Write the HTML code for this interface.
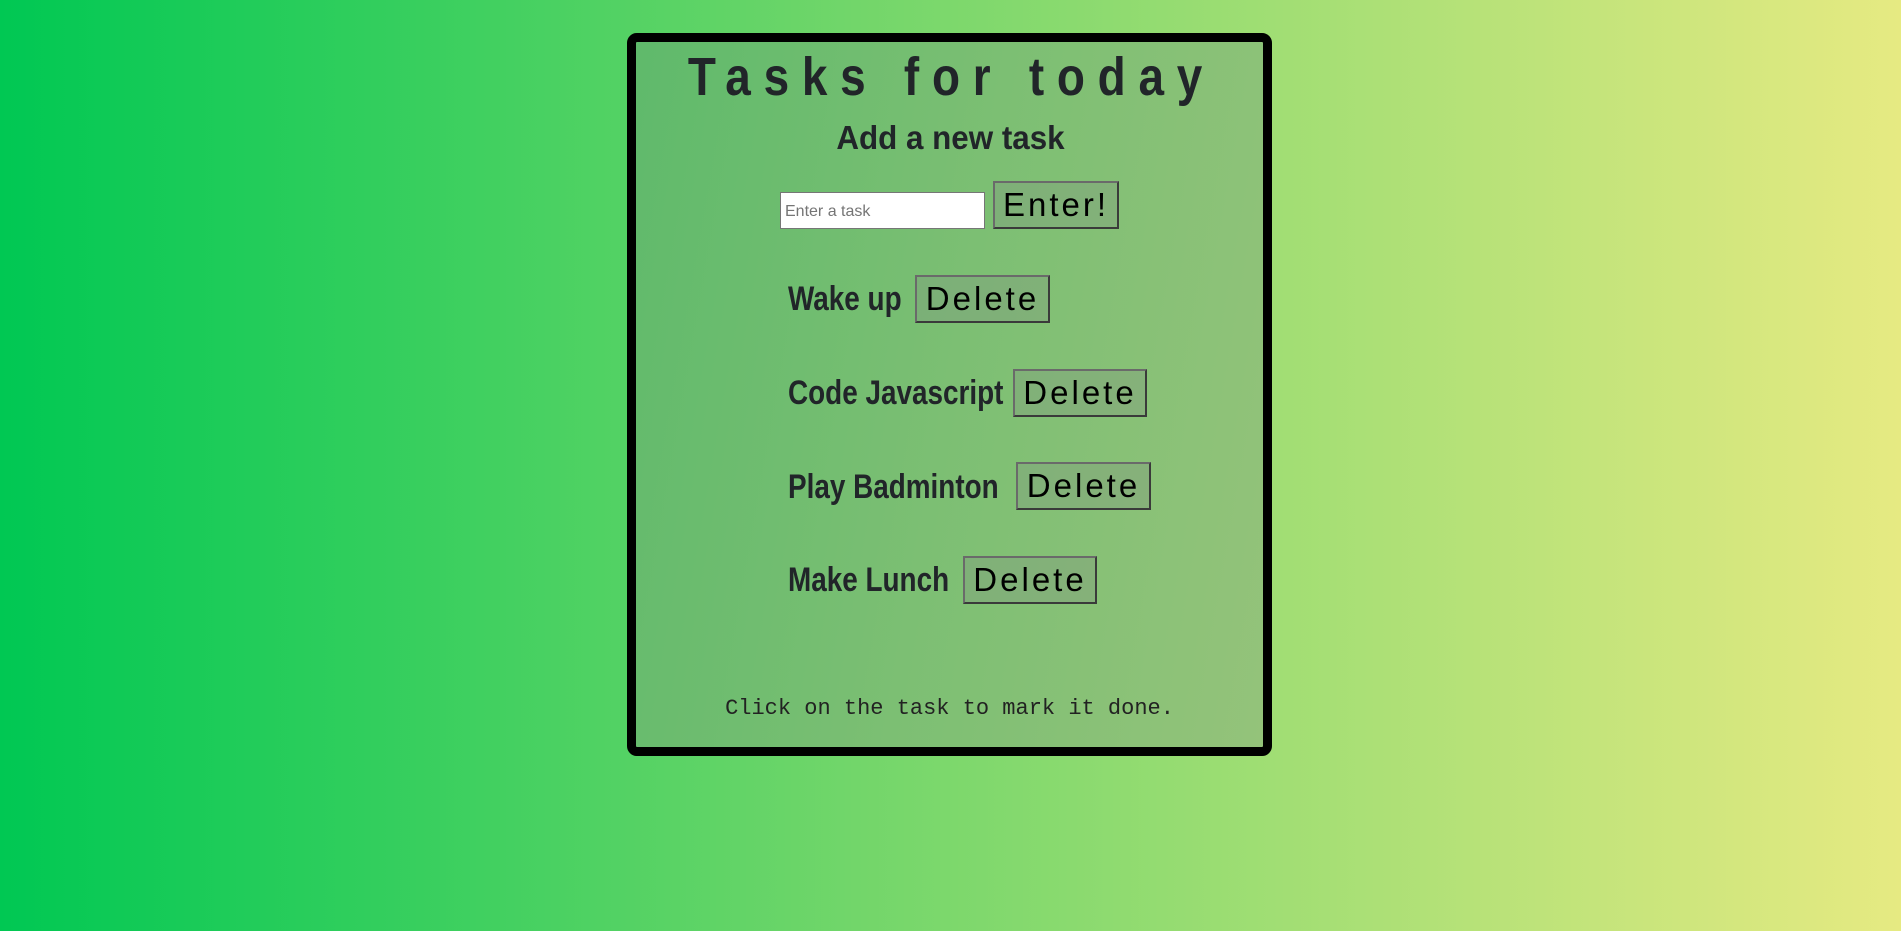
<!DOCTYPE html>
<html><head><meta charset="utf-8"><style>
html,body{margin:0;padding:0;width:1901px;height:931px;overflow:hidden}
body{background:linear-gradient(to right,#00c853 0%,#72d66a 45%,#e6ea82 100%);font-family:"Liberation Sans",sans-serif;color:#212529;position:relative}
.card{position:absolute;left:627px;top:33px;width:627px;height:705px;border:9px solid #000;border-radius:10px;background:linear-gradient(100deg,#5fba6b 0%,#7cbf73 50%,#94c37a 100%)}
.a{position:absolute;white-space:nowrap}
.title{left:0;width:1901px;text-align:center;top:50px;font-size:54px;line-height:54px;font-weight:bold;letter-spacing:15px;transform:scaleX(0.85);transform-origin:957px 0}
.sub{left:0;width:1901px;text-align:center;top:121px;font-size:33px;line-height:33px;font-weight:bold;transform:scaleX(0.95);transform-origin:950px 0}
.task{font-size:34px;line-height:34px;font-weight:bold;transform:scaleX(0.82);transform-origin:0 0;left:788px}
.btn{position:absolute;box-sizing:border-box;border:2px solid #3a3a3a;border-top-color:#6a6a6a;border-left-color:#6a6a6a;background:rgba(130,150,130,0.35);font-size:33px;letter-spacing:3px;color:#000;text-align:center;line-height:44px;height:48px}
.inp{position:absolute;left:780px;top:192px;width:205px;height:37px;box-sizing:border-box;background:#fff;border:1px solid #767676;font-size:16px;color:#757575;padding-left:4px;line-height:37px}
.foot{left:0;width:1901px;text-align:center;top:698px;font-family:"Liberation Mono",monospace;font-size:22px;line-height:22px;color:#222;transform:translateX(-1px)}
</style></head><body>
<div class="card"></div>
<div class="a title">Tasks for today</div>
<div class="a sub">Add a new task</div>
<div class="inp">Enter a task</div>
<div class="btn" style="left:993px;top:181px;width:126px">Enter!</div>

<div class="a task" style="top:282px">Wake up</div>
<div class="btn" style="left:915px;top:275px;width:135px">Delete</div>

<div class="a task" style="top:376px">Code Javascript</div>
<div class="btn" style="left:1013px;top:369px;width:134px">Delete</div>

<div class="a task" style="top:470px">Play Badminton</div>
<div class="btn" style="left:1016px;top:462px;width:135px">Delete</div>

<div class="a task" style="top:563px">Make Lunch</div>
<div class="btn" style="left:963px;top:556px;width:134px">Delete</div>

<div class="a foot">Click on the task to mark it done.</div>
</body></html>
